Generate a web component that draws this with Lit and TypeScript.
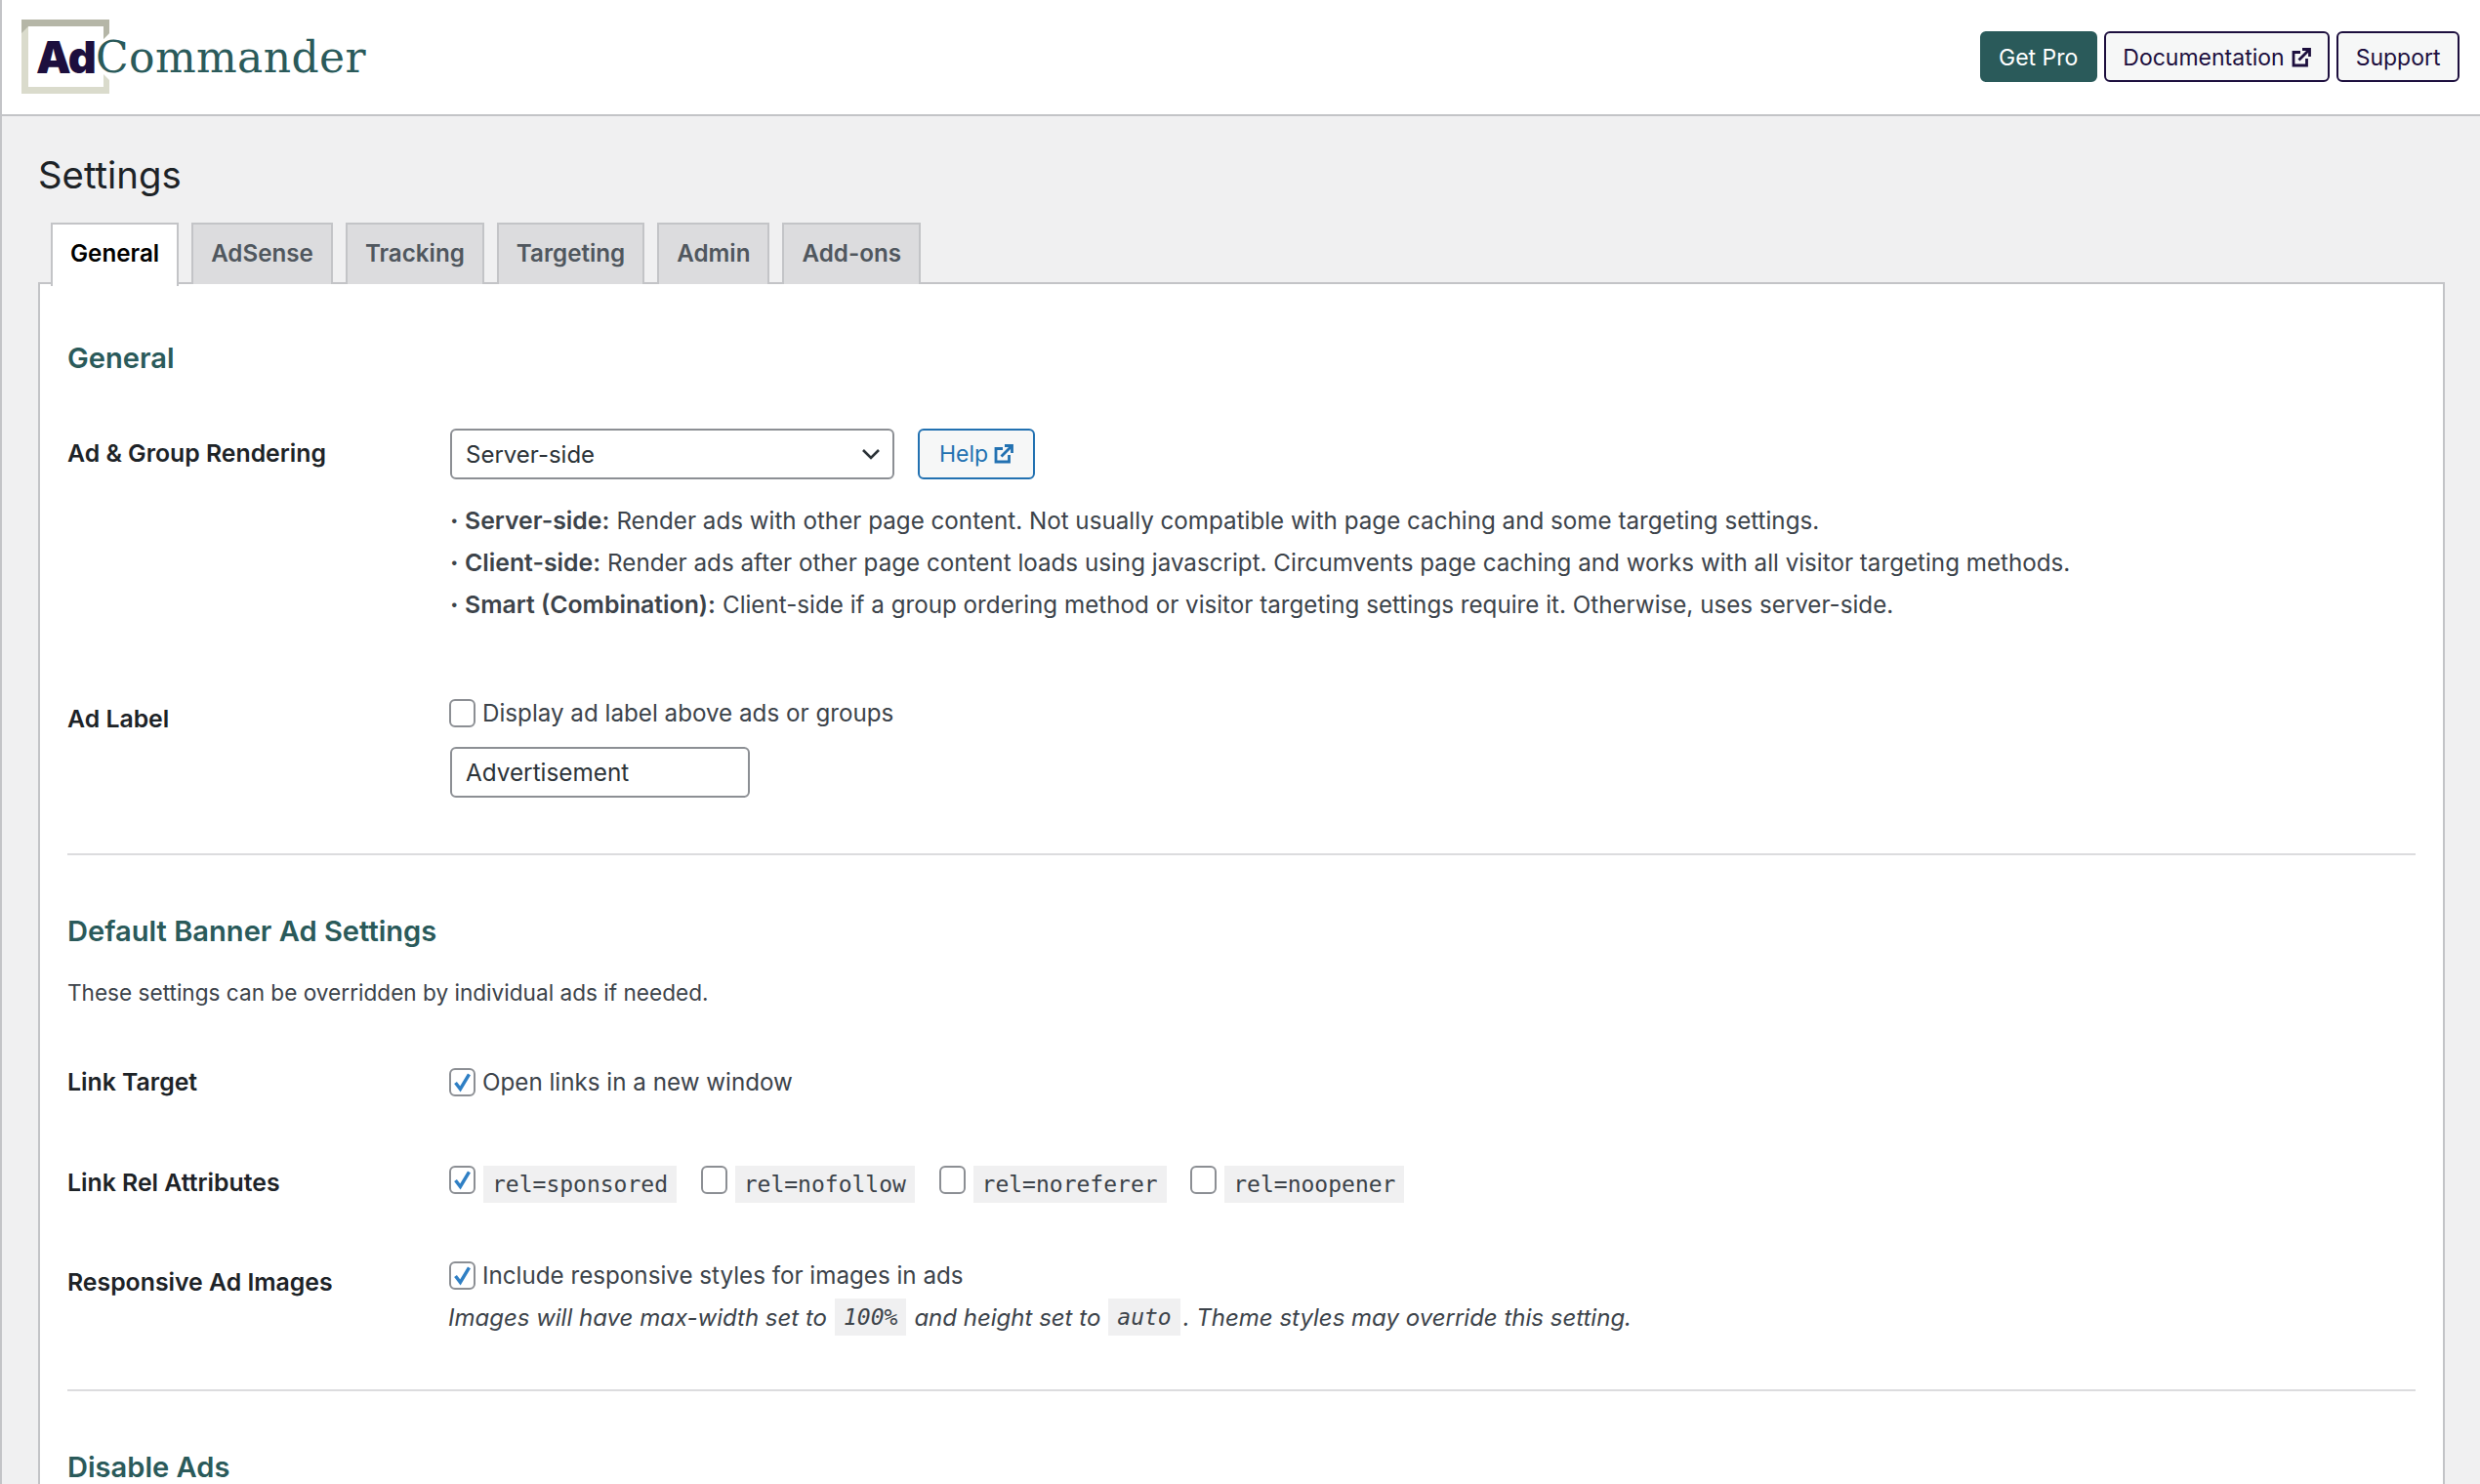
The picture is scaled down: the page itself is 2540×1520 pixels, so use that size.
import { LitElement, html, css, svg } from "lit";
import { customElement } from "lit/decorators.js";

const ext = () => html`<svg class="ext" viewBox="0 0 20 20" width="20" height="20" fill="none" stroke="currentColor" stroke-width="2.8"><path d="M9 4.5H2V18H15.5V11"/><path d="M7.5 12.5 18 2"/><path d="M11 1.5H18.5V9"/></svg>`;
const check = svg`<svg viewBox="0 0 28 28" width="27" height="27"><path d="M5.5 14.5 11.5 22.5 22.5 4" fill="none" stroke="#2f7fc4" stroke-width="4.2"/></svg>`;

@customElement("app-root")
export class AppRoot extends LitElement {
  static styles = css`
    :host { display: block; height: 1520px; overflow: hidden; background: #f0f0f1; border-left: 2px solid #c3c4c7; box-sizing: border-box; font-family: Inter, "Liberation Sans", sans-serif; font-size: 24.2px; color: #3c434a; }
    * { box-sizing: border-box; }
    .top { height: 119px; background: #fff; border-bottom: 2px solid #c3c4c7; display: flex; justify-content: space-between; align-items: flex-start; padding: 20px 21px 0 20px; }
    .logo { position: relative; width: 360px; height: 76px; display: flex; align-items: center; padding: 0 0 0 15px; }
    .frame { position: absolute; left: 0; top: 0; }
    .ad { position: relative; font-weight: 900; font-size: 45px; color: #1d0f3e; letter-spacing: -1px; }
    .cmd { position: relative; font-family: "DejaVu Serif", serif; font-size: 44px; color: #2a5a5a; font-weight: 400; letter-spacing: .4px; }
    .btns { display: flex; gap: 7px; padding-top: 12px; }
    .btn { height: 52px; display: flex; align-items: center; gap: 7px; padding: 2px 17.5px 0; border: 2px solid #1d0f3e; border-radius: 6px; background: #f6f7f7; color: #1d0f3e; font-size: 23px; }
    .btn.pro { background: #2a5a5a; border-color: #2a5a5a; color: #fff; }
    .wrap { padding: 0 36px 0 37px; }
    h1 { margin: 0; font-size: 38.3px; font-weight: 400; color: #1d2327; line-height: 48px; padding-top: 36px; }
    .tabs { display: flex; gap: 13px; padding: 25px 0 0 13px; height: 88px; margin-bottom: -2px; position: relative; }
    .tab { height: 63px; padding: 0 18px 2px; display: flex; align-items: center; background: #dcdcde; border: 2px solid #c3c4c7; border-bottom: 0; font-weight: 600; font-size: 24.2px; color: #50575e; }
    .tab.on { background: #fff; color: #000; height: 65px; padding-bottom: 4px; position: relative; z-index: 1; }
    .panel { background: #fff; border: 2px solid #c3c4c7; padding: 0 28px; height: 1300px; }
    h2 { margin: 0; font-size: 29.1px; font-weight: 600; color: #2a5a5a; line-height: 38px; }
    .h-general { padding-top: 57px; }
    .row { display: grid; grid-template-columns: 390px 1fr; }
    .r1 { margin-top: 53px; }
    .r2 { margin-top: 75px; }
    .r3 { margin-top: 60px; }
    .r4 { margin-top: 70px; }
    .r5 { margin-top: 60px; }
    .lab { font-weight: 600; color: #1d2327; font-size: 24.8px; line-height: 32px; }
    .p9 { padding-top: 9px; }
    .p4 { padding-top: 4px; }
    .p1 { padding-top: 1px; }
    .p5 { padding-top: 5px; }
    .ctl { display: flex; align-items: center; gap: 24px; margin-left: 2px; }
    .sel { width: 455px; height: 52px; border: 2px solid #8c8f94; border-radius: 6px; display: flex; align-items: center; justify-content: space-between; padding: 0 12px 0 14px; color: #2c3338; font-size: 24px; }
    .help { height: 52px; width: 120px; border: 2px solid #2271b1; border-radius: 6px; background: #f6f7f7; color: #2271b1; display: flex; align-items: center; justify-content: center; gap: 6px; font-size: 23px; }
    .notes { margin-top: 21px; line-height: 43px; margin-left: 2px; }
    .note { display: flex; }
    .dot { width: 15px; font-weight: 800; }
    .note b { font-weight: 600; margin-right: 7px; font-size: 24.8px; }
    .note div { white-space: pre; }
    .cb { width: 27px; height: 29px; flex: none; border: 2px solid #8c8f94; border-radius: 6px; background: #fff; display: flex; align-items: center; justify-content: center; }
    .chk { display: flex; align-items: center; gap: 7px; margin-left: 1px; }
    .txt { width: 307px; height: 52px; border: 2px solid #8c8f94; border-radius: 6px; display: flex; align-items: center; padding: 0 14px; margin: 20px 0 0 2px; color: #2c3338; font-size: 24.3px; }
    hr { margin: 0; height: 2px; border: 0; background: #dcdcde; }
    .hr1 { margin-top: 57px; }
    .hr2 { margin-top: 55px; }
    .h2b { margin-top: 59px; }
    code { font-family: "DejaVu Sans Mono", "Liberation Mono", monospace; font-size: 23px; background: #f0f0f1; padding: 3px 9px; line-height: 32px; display: inline-block; color: #3c434a; }
    .desc { font-size: 22.6px; color: #3c434a; line-height: 30px; margin-top: 29px; }
    .rels { display: flex; align-items: flex-start; margin-left: 1px; }
    .rels .cb { margin-right: 8px; }
    .rels code { margin-right: 24.7px; }
    .it { font-style: italic; font-size: 24px; display: flex; align-items: center; white-space: pre; margin-top: 9px; }
    .it code { margin: 0 8px; font-style: italic; }
    .it code.last { margin-right: 3px; }
  `;
  render() {
    return html`
      <div class="top">
        <div class="logo">
          <svg class="frame" width="92" height="76" viewBox="0 0 92 76">
            <path d="M0 0H90V14L84 20V7H7V69H84V56L90 62V76H0Z" fill="#dadbcc"/>
            <path d="M0 0H90V14L84 20V7H7L0 14Z" fill="#b5b6a7"/>
          </svg>
          <span class="ad">Ad</span><span class="cmd">Commander</span>
        </div>
        <div class="btns">
          <div class="btn pro">Get Pro</div>
          <div class="btn">Documentation ${ext()}</div>
          <div class="btn">Support</div>
        </div>
      </div>
      <div class="wrap">
        <h1>Settings</h1>
        <div class="tabs">
          ${["General", "AdSense", "Tracking", "Targeting", "Admin", "Add-ons"].map((t, i) => html`<div class="tab ${i === 0 ? "on" : ""}">${t}</div>`)}
        </div>
        <div class="panel">
          <h2 class="h-general">General</h2>
          <div class="row r1">
            <div class="lab p9">Ad &amp; Group Rendering</div>
            <div>
              <div class="ctl">
                <div class="sel">Server-side <svg width="20" height="12" viewBox="0 0 20 12" fill="none" stroke="#2c3338" stroke-width="2.6"><path d="M2 2 10 10 18 2"/></svg></div>
                <div class="help">Help ${ext()}</div>
              </div>
              <div class="notes">
                <div class="note"><span class="dot">·</span><b>Server-side:</b><div>Render ads with other page content. Not usually compatible with page caching and some targeting settings.</div></div>
                <div class="note"><span class="dot">·</span><b>Client-side:</b><div>Render ads after other page content loads using javascript. Circumvents page caching and works with all visitor targeting methods.</div></div>
                <div class="note"><span class="dot">·</span><b>Smart (Combination):</b><div>Client-side if a group ordering method or visitor targeting settings require it. Otherwise, uses server-side.</div></div>
              </div>
            </div>
          </div>
          <div class="row r2">
            <div class="lab p4">Ad Label</div>
            <div>
              <div class="chk"><span class="cb"></span>Display ad label above ads or groups</div>
              <div class="txt">Advertisement</div>
            </div>
          </div>
          <hr class="hr1" />
          <h2 class="h2b">Default Banner Ad Settings</h2>
          <div class="desc">These settings can be overridden by individual ads if needed.</div>
          <div class="row r3">
            <div class="lab">Link Target</div>
            <div class="chk"><span class="cb">${check}</span>Open links in a new window</div>
          </div>
          <div class="row r4">
            <div class="lab p1">Link Rel Attributes</div>
            <div class="rels">
              <span class="cb">${check}</span><code>rel=sponsored</code>
              <span class="cb"></span><code>rel=nofollow</code>
              <span class="cb"></span><code>rel=noreferer</code>
              <span class="cb"></span><code>rel=noopener</code>
            </div>
          </div>
          <div class="row r5">
            <div class="lab p5">Responsive Ad Images</div>
            <div>
              <div class="chk"><span class="cb">${check}</span>Include responsive styles for images in ads</div>
              <div class="it">Images will have max-width set to<code>100%</code>and height set to<code class="last">auto</code>. Theme styles may override this setting.</div>
            </div>
          </div>
          <hr class="hr2" />
          <h2 class="h2b">Disable Ads</h2>
        </div>
      </div>
    `;
  }
}
